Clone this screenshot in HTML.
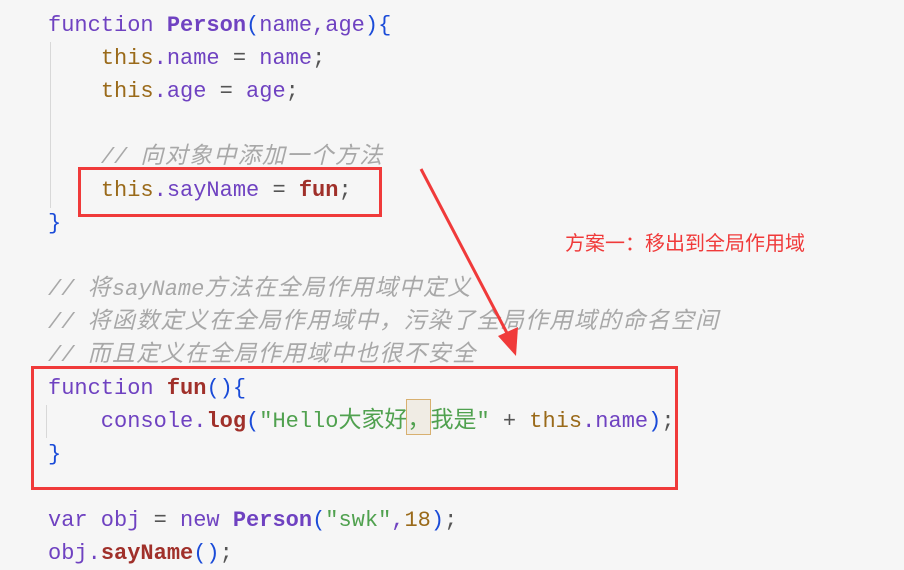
<!DOCTYPE html>
<html><head><meta charset="utf-8"><style>
body{margin:0;width:904px;height:568px;background:#f6f6f6;overflow:hidden;position:relative}
pre{margin:0;position:absolute;left:48px;top:9px;font-family:"Liberation Mono","Noto Sans CJK SC",monospace;font-size:22px;line-height:33px;color:#6f42c1}
.k{color:#6f42c1}.t{color:#9a6a1a}.b{color:#6f42c1;font-weight:bold}.f{color:#a0302a;font-weight:bold}
.c{color:#a8a8a8;font-style:italic}.s{color:#50a14f}.n{color:#9a6a1a}.p{color:#1a4bd8}.d{color:#555}
.z{font-family:"Noto Sans CJK SC",sans-serif;font-size:23px;letter-spacing:1.3px;line-height:20px}
.box{position:absolute;border:3px solid #f03a3a}
.g{position:absolute;width:1px;background:#d8d8d8}
.lbl{position:absolute;left:565px;top:227px;color:#f03a3a;font-family:"Noto Sans CJK SC",sans-serif;font-size:20px}
</style></head><body>
<div class="g" style="left:50px;top:42px;height:166px"></div>
<div class="g" style="left:46px;top:405px;height:33px"></div>
<pre><span class="k">function</span> <span class="b">Person</span><span class="p">(</span>name,age<span class="p">){</span>
    <span class="t">this</span>.name <span class="d">=</span> name<span class="d">;</span>
    <span class="t">this</span>.age <span class="d">=</span> age<span class="d">;</span>

    <span class="c">// <span class="z">向对象中添加一个方法</span></span>
    <span class="t">this</span>.sayName <span class="d">=</span> <span class="f">fun</span><span class="d">;</span>
<span class="p">}</span>

<span class="c">// <span class="z">将</span>sayName<span class="z">方法在全局作用域中定义</span></span>
<span class="c">// <span class="z">将函数定义在全局作用域中，污染了全局作用域的命名空间</span></span>
<span class="c">// <span class="z">而且定义在全局作用域中也很不安全</span></span>
<span class="k">function</span> <span class="f">fun</span><span class="p">(){</span>
    console.<span class="f">log</span><span class="p">(</span><span class="s">"Hello<span class="z" style="letter-spacing:0">大家好</span><span class="z" style="letter-spacing:0;outline:1px solid #d8b070;background:#f0ece4">，</span><span class="z" style="letter-spacing:0">我是</span>"</span> <span class="d">+</span> <span class="t">this</span>.name<span class="p">)</span><span class="d">;</span>
<span class="p">}</span>

<span class="k">var</span> obj <span class="d">=</span> <span class="k">new</span> <span class="b">Person</span><span class="p">(</span><span class="s">"swk"</span>,<span class="n">18</span><span class="p">)</span><span class="d">;</span>
obj.<span class="f">sayName</span><span class="p">()</span><span class="d">;</span></pre>
<div class="box" style="left:78px;top:167px;width:298px;height:44px"></div>
<div class="box" style="left:31px;top:366px;width:641px;height:118px"></div>
<div class="lbl">方案一：移出到全局作用域</div>
<svg style="position:absolute;left:0;top:0" width="904" height="568">
<line x1="421" y1="169" x2="508" y2="335" stroke="#f03a3a" stroke-width="3"/>
<polygon points="516,356 498,336 518,327" fill="#f03a3a"/>
</svg>
</body></html>
